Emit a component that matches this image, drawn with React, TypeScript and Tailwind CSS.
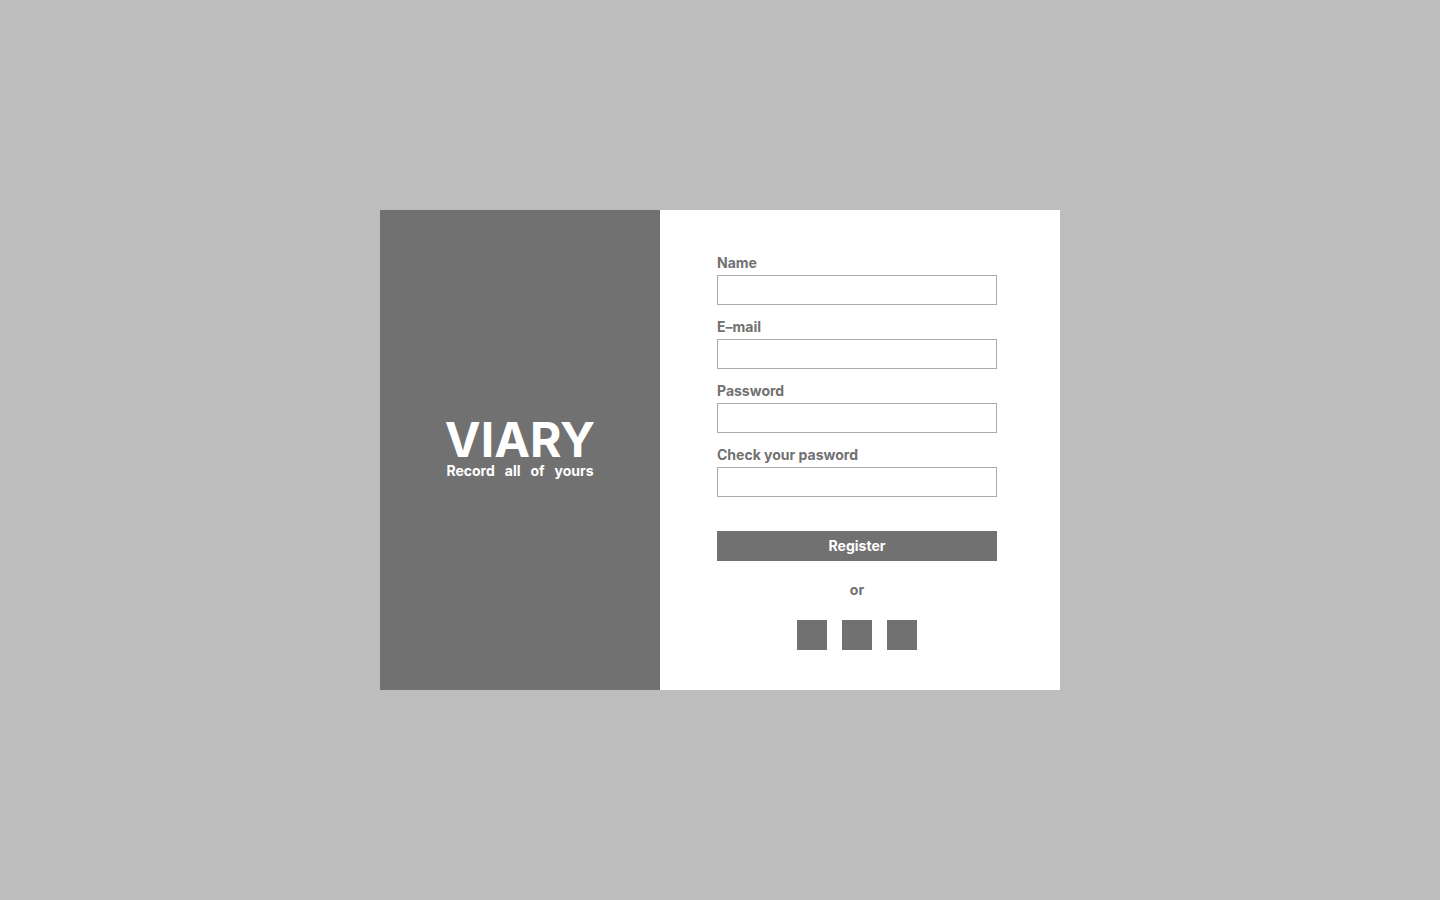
const fields = [
  { id: "name", label: "Name", type: "text" },
  { id: "email", label: "E–mail", type: "email" },
  { id: "password", label: "Password", type: "password" },
  { id: "confirm", label: "Check your pasword", type: "password" },
];

const socials = ["first", "second", "third"];

export default function App() {
  return (
    <main className="flex min-h-screen items-center justify-center bg-[#bdbdbd] font-['Inter','Liberation_Sans',sans-serif] text-sm font-bold text-[#717171]">
      <div className="flex w-full max-w-[680px] bg-white">
        <section className="flex w-[280px] shrink-0 flex-col items-center justify-center bg-[#717171] text-white">
          <h1 className="text-5xl leading-[42px] font-bold">VIARY</h1>
          <p className="leading-5 whitespace-pre">{"Record   all   of   yours"}</p>
        </section>
        <form className="flex grow flex-col pt-[43px] pr-[63px] pb-10 pl-[57px]" onSubmit={(e) => e.preventDefault()}>
          <div className="flex flex-col gap-3">
            {fields.map((f) => (
              <div key={f.id} className="flex flex-col gap-[2px]">
                <label htmlFor={f.id} className="leading-5">{f.label}</label>
                <input id={f.id} type={f.type} className="h-[30px] w-full border border-[#a9a9a9] bg-white px-2 outline-none" />
              </div>
            ))}
          </div>
          <button type="submit" className="mt-[34px] h-[30px] bg-[#717171] leading-5 text-white">Register</button>
          <p className="mt-[19px] text-center leading-5">or</p>
          <div className="mt-5 flex justify-center gap-[15px]">
            {socials.map((s) => (
              <button key={s} type="button" className="size-[30px] bg-[#717171]" />
            ))}
          </div>
        </form>
      </div>
    </main>
  );
}
